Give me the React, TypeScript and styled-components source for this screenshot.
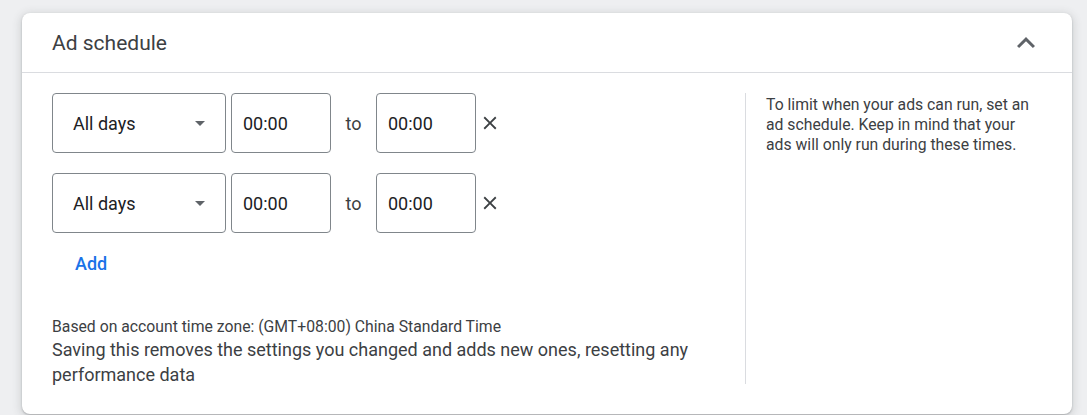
import React from "react";
import styled, { createGlobalStyle } from "styled-components";

const GlobalStyle = createGlobalStyle`
  html, body {
    margin: 0;
    padding: 0;
    background: #eeeff1;
    font-family: Roboto, "Liberation Sans", Arial, sans-serif;
  }
  * { box-sizing: border-box; }
`;

const Page = styled.div`
  padding: 13px 15px 0 22px;
  height: 415px;
  overflow: hidden;
`;

const Card = styled.section`
  width: 1050px;
  height: 401px;
  background: #ffffff;
  border-radius: 8px;
  box-shadow: 0 1px 2px rgba(60, 64, 67, 0.3), 0 2px 8px 2px rgba(60, 64, 67, 0.15);
  display: flex;
  flex-direction: column;
`;

const Header = styled.header`
  height: 60px;
  display: flex;
  align-items: center;
  justify-content: space-between;
  padding: 0 26px 0 30px;
  border-bottom: 1px solid #dadce0;
`;

const Title = styled.h2`
  margin: 0;
  font-size: 21px;
  font-weight: 400;
  color: #3c4043;
`;

const IconButton = styled.button`
  width: 40px;
  height: 40px;
  border: none;
  background: transparent;
  padding: 0;
  display: flex;
  align-items: center;
  justify-content: center;
  color: #5f6368;
  cursor: pointer;
`;

const Body = styled.div`
  display: flex;
  padding: 20px 0 0 30px;
`;

const Main = styled.div`
  width: 693px;
  display: flex;
  flex-direction: column;
`;

const Aside = styled.aside`
  border-left: 1px solid #dadce0;
  padding: 2px 0 0 20px;
  width: 292px;
  height: 291px;
  font-size: 15.75px;
  line-height: 20px;
  color: #3c4043;
`;

const Rows = styled.div`
  display: flex;
  flex-direction: column;
  gap: 20px;
`;

const Row = styled.div`
  display: flex;
  align-items: center;
`;

const Field = styled.div<{ $w: number }>`
  width: ${(p) => p.$w}px;
  height: 60px;
  border: 1px solid #80868b;
  border-radius: 4px;
  display: flex;
  align-items: center;
  font-size: 18px;
  color: #202124;
`;

const SelectField = styled(Field)`
  padding: 0 20px 0 20px;
  justify-content: space-between;
  margin-right: 5px;
`;

const TimeField = styled(Field)`
  padding: 0 0 0 11px;
`;

const Caret = styled.span`
  width: 0;
  height: 0;
  border-left: 5px solid transparent;
  border-right: 5px solid transparent;
  border-top: 5px solid #5f6368;
`;

const To = styled.span`
  width: 45px;
  text-align: center;
  font-size: 18px;
  color: #3c4043;
`;

const Remove = styled.button`
  width: 28px;
  height: 28px;
  border: none;
  background: transparent;
  padding: 0;
  display: flex;
  align-items: center;
  justify-content: center;
  color: #3c4043;
`;

const AddButton = styled.button`
  align-self: flex-start;
  margin: 12px 0 0 0;
  height: 36px;
  padding: 0 23px;
  border: none;
  background: transparent;
  font-family: inherit;
  font-size: 18px;
  font-weight: 500;
  color: #1a73e8;
  cursor: pointer;
`;

const Note = styled.div`
  margin-top: 36px;
  font-size: 15.75px;
  line-height: 20px;
  color: #3c4043;
`;

const Warning = styled.div`
  font-size: 18px;
  line-height: 25px;
  color: #3c4043;
  width: 660px;
`;

const ChevronUp = () => (
  <svg width="36" height="36" viewBox="0 0 24 24" fill="currentColor">
    <path d="M12 8l-6 6 1.41 1.41L12 10.83l4.59 4.58L18 14z" />
  </svg>
);

const CloseIcon = () => (
  <svg width="22" height="22" viewBox="0 0 24 24" fill="currentColor">
    <path d="M19 6.41L17.59 5 12 10.59 6.41 5 5 6.41 10.59 12 5 17.59 6.41 19 12 13.41 17.59 19 19 17.59 13.41 12z" />
  </svg>
);

const ScheduleRow = () => (
  <Row>
    <SelectField $w={174}>
      <span>All days</span>
      <Caret />
    </SelectField>
    <TimeField $w={100}>00:00</TimeField>
    <To>to</To>
    <TimeField $w={100}>00:00</TimeField>
    <Remove aria-label="Remove">
      <CloseIcon />
    </Remove>
  </Row>
);

export default function App() {
  return (
    <>
      <GlobalStyle />
      <Page>
        <Card>
          <Header>
            <Title>Ad schedule</Title>
            <IconButton aria-label="Collapse">
              <ChevronUp />
            </IconButton>
          </Header>
          <Body>
            <Main>
              <Rows>
                <ScheduleRow />
                <ScheduleRow />
              </Rows>
              <AddButton>Add</AddButton>
              <Note>Based on account time zone: (GMT+08:00) China Standard Time</Note>
              <Warning>
                Saving this removes the settings you changed and adds new ones, resetting any performance data
              </Warning>
            </Main>
            <Aside>
              To limit when your ads can run, set an ad schedule. Keep in mind that your ads will only run
              during these times.
            </Aside>
          </Body>
        </Card>
      </Page>
    </>
  );
}
